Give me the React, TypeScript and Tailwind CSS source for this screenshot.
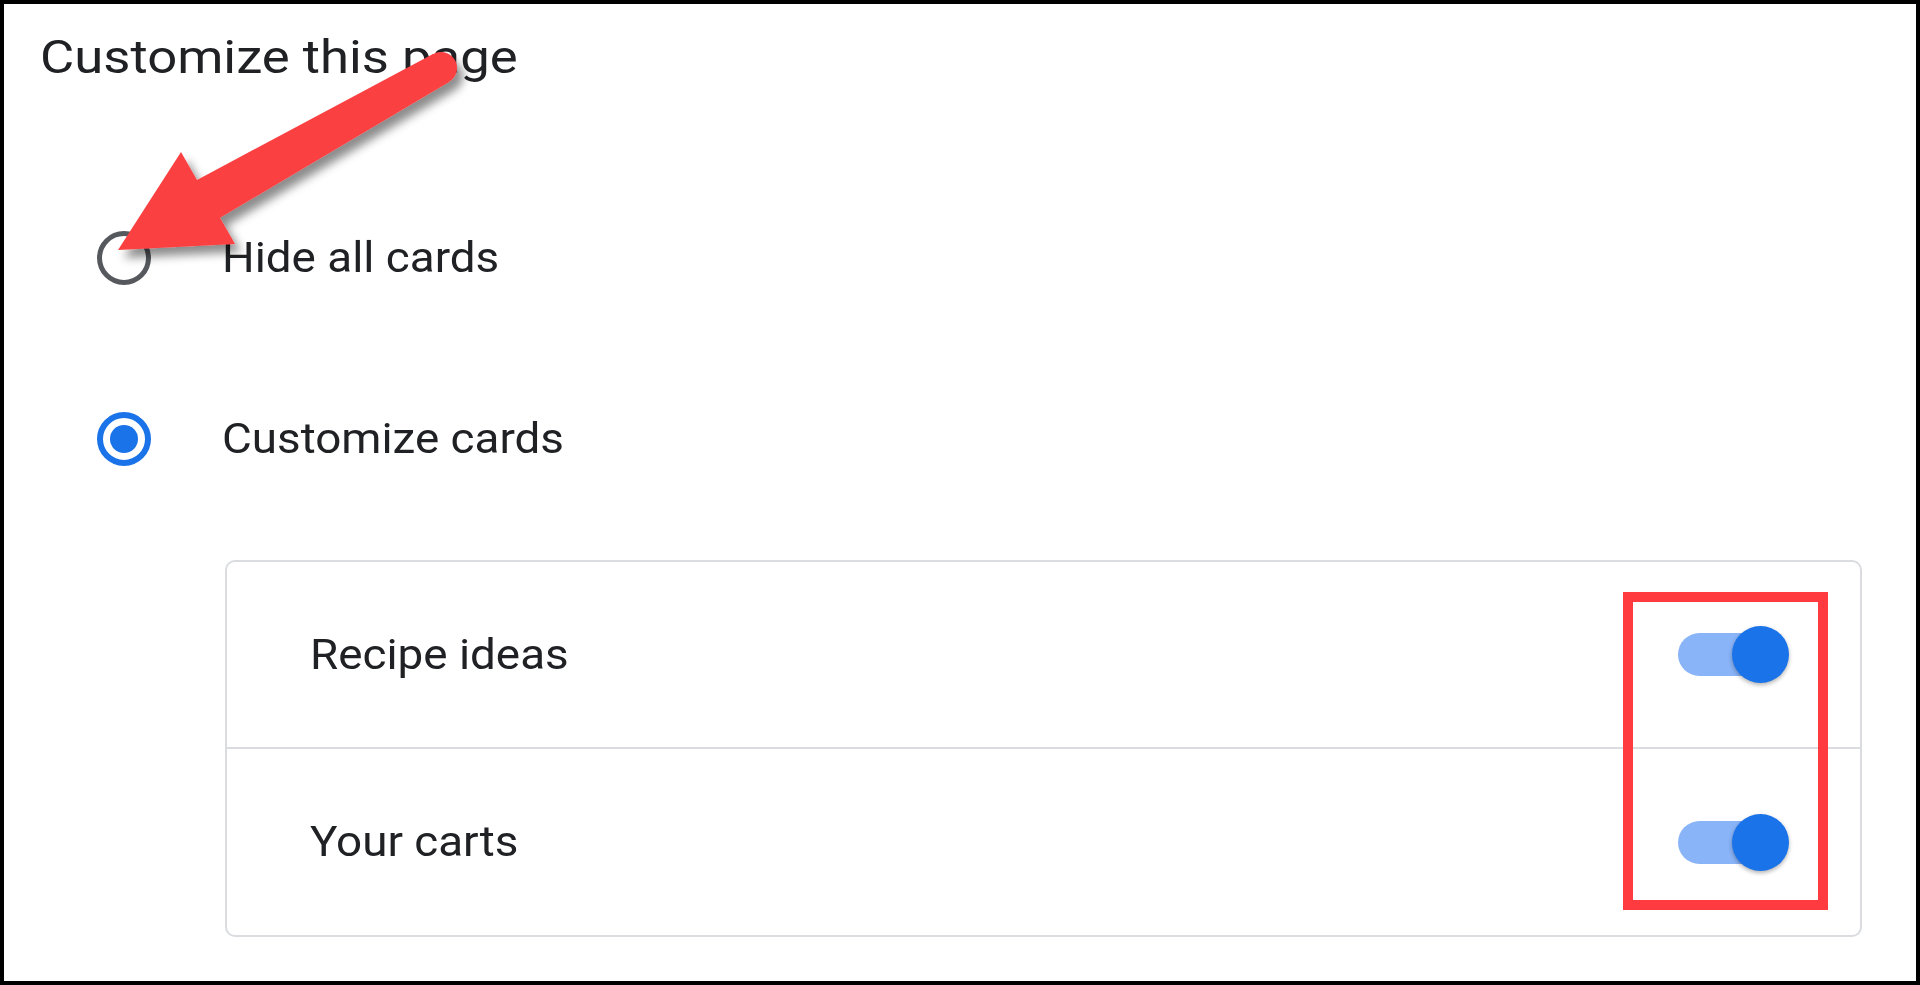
import React from "react";

function Radio({ checked }: { checked: boolean }) {
  if (checked) {
    return (
      <div className="w-[54px] h-[54px] rounded-full border-[6px] border-[#1a73e8] flex items-center justify-center shrink-0">
        <div className="w-[28px] h-[28px] rounded-full bg-[#1a73e8]" />
      </div>
    );
  }
  return <div className="w-[54px] h-[54px] rounded-full border-[5px] border-[#55585d] shrink-0" />;
}

function Toggle() {
  return (
    <div className="relative w-[111px] h-[57px] shrink-0">
      <div className="absolute left-0 top-[7px] w-[100px] h-[43px] rounded-full bg-[#8ab4f8]" />
      <div className="absolute right-0 top-0 w-[57px] h-[57px] rounded-full bg-[#1a73e8] shadow-[0_2px_4px_rgba(0,0,0,0.3)]" />
    </div>
  );
}

function Label({ children }: { children: React.ReactNode }) {
  return (
    <span className="inline-block origin-left scale-x-[1.09] text-[42px] leading-none text-[#202124] font-[Roboto,sans-serif]">
      {children}
    </span>
  );
}

export default function App() {
  return (
    <div className="relative w-[1920px] h-[985px] bg-white border-4 border-black box-border overflow-hidden font-[Roboto,sans-serif]">
      <div className="flex flex-col pl-[36px] pr-[54px]">
        <div className="mt-[25px] h-[56px] leading-[56px] text-[47px] text-[#202124]">
          <span className="inline-block origin-left scale-x-[1.12]">Customize this page</span>
        </div>

        <div className="mt-[133px] h-[80px] flex items-center pl-[57px] gap-[71px]">
          <Radio checked={false} />
          <Label>Hide all cards</Label>
        </div>

        <div className="mt-[101px] h-[80px] flex items-center pl-[57px] gap-[71px]">
          <Radio checked={true} />
          <Label>Customize cards</Label>
        </div>

        <div className="mt-[81px] ml-[185px] border-2 border-[#dadce0] rounded-[10px] flex flex-col">
          <div className="h-[185px] flex items-center justify-between pl-[83px] pr-[71px]">
            <Label>Recipe ideas</Label>
            <Toggle />
          </div>
          <div className="h-[188px] border-t-2 border-[#dadce0] flex items-center justify-between pl-[83px] pr-[71px]">
            <Label>Your carts</Label>
            <Toggle />
          </div>
        </div>
      </div>

      {/* red highlight box */}
      <div className="absolute left-[1619px] top-[588px] w-[205px] h-[318px] border-[10px] border-[#ff3b3f] pointer-events-none" />

      {/* arrow annotation */}
      <svg
        className="absolute left-[-4px] top-[-4px] pointer-events-none"
        width="1920"
        height="985"
        viewBox="0 0 1920 985"
      >
        <defs>
          <filter id="arrowShadow" x="-20%" y="-20%" width="140%" height="140%">
            <feDropShadow dx="6" dy="8" stdDeviation="5" floodColor="#000" floodOpacity="0.45" />
          </filter>
        </defs>
        <g filter="url(#arrowShadow)" fill="#fb4143">
          <path d="M433,54 L197,179.9 L181,152 L118,250 L235,244 L220,217.8 L449,82 Z" />
          <circle cx="441" cy="68" r="16" />
        </g>
      </svg>
    </div>
  );
}
